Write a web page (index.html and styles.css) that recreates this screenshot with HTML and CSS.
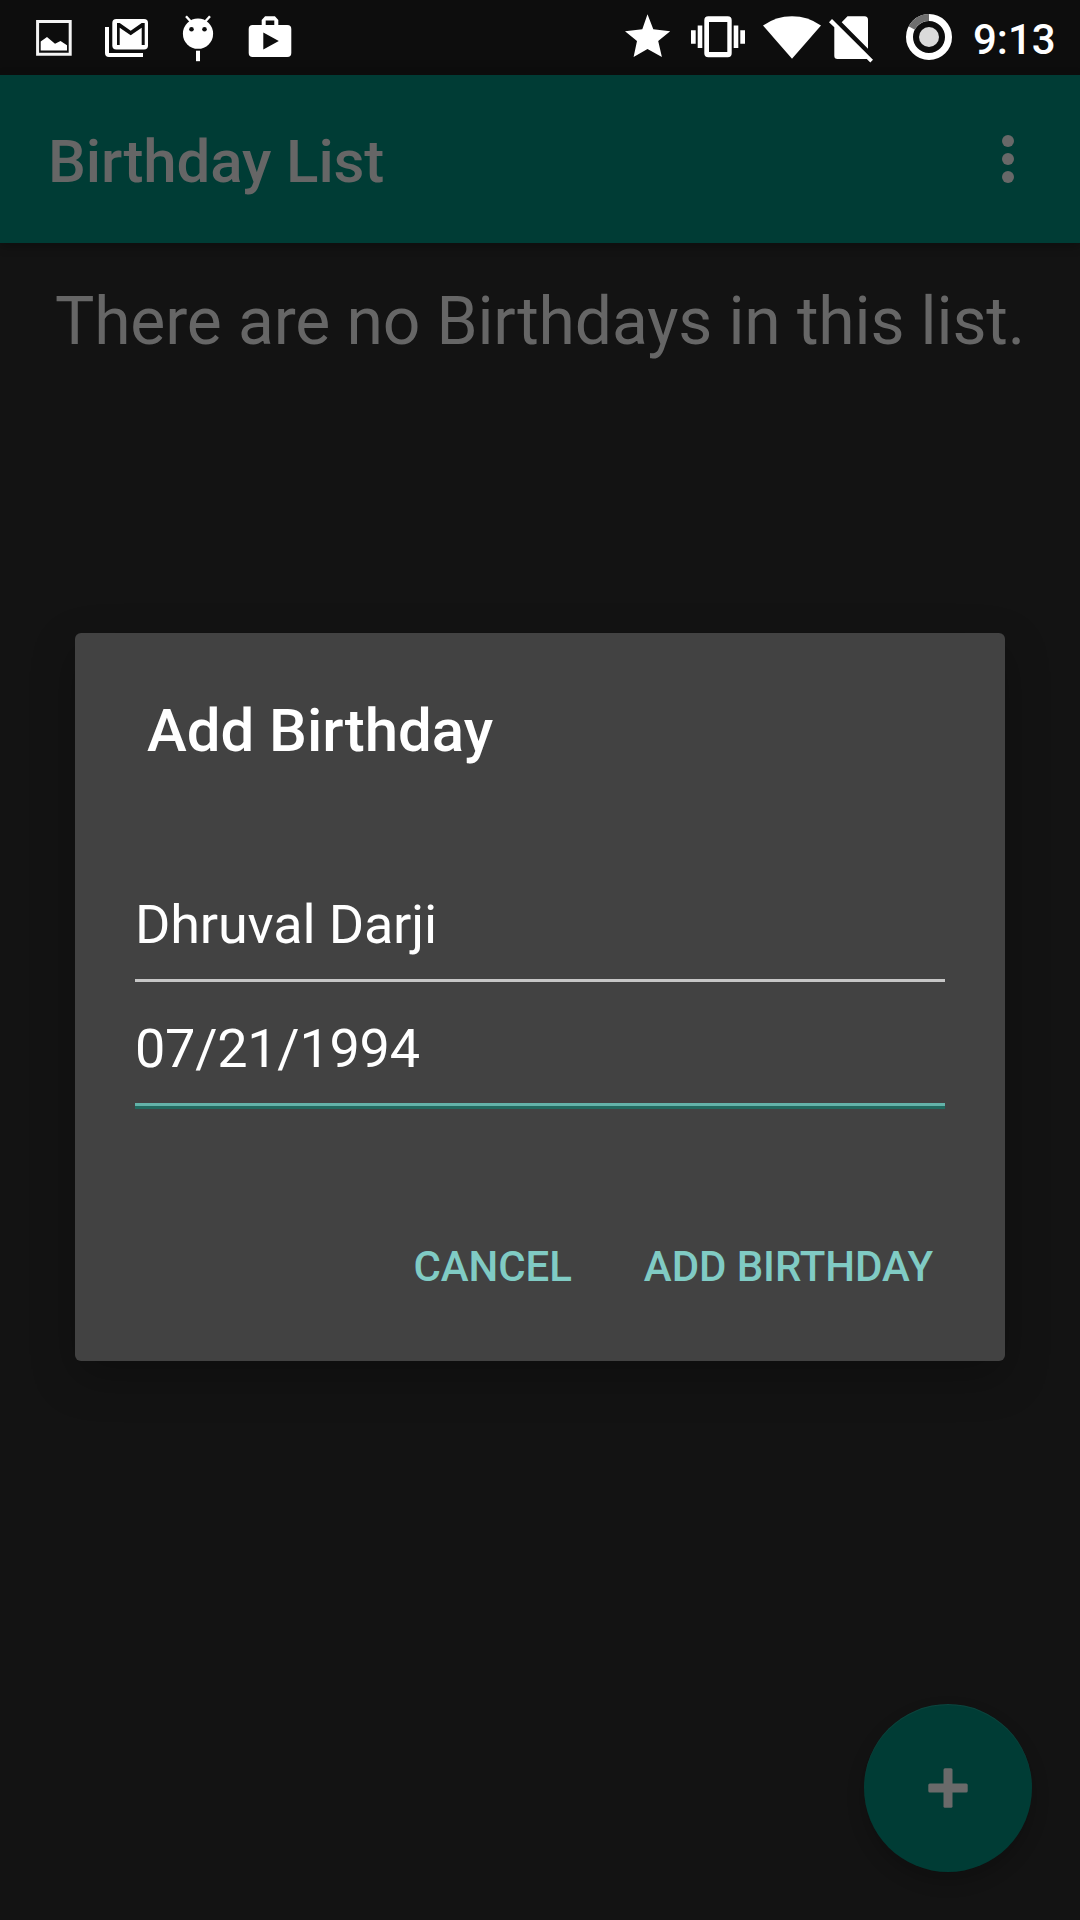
FILE: index.html
```html
<!DOCTYPE html>
<html lang="en">
<head>
<meta charset="utf-8">
<title>Birthday List</title>
<link rel="stylesheet" href="styles.css">
</head>
<body>
<div class="screen">
  <div class="status-bar">
    <div class="notifications">
      <svg width="36" height="75" viewBox="36 0 36 75"><path d="M37.600 21.600h32.600v32.600h-32.600z" fill="none" stroke="#f4f4f4" stroke-width="3"/><path d="M40.700 50.500v-9L47 37l8 6.800 5.500-2.800 6.500 4.300v5.200z" fill="#fff"/></svg>
      <svg width="44" height="75" viewBox="105 0 44 75"><path d="M105 27h4v26h34v4h-34q-4 0-4-4z" fill="#fff"/><rect x="112.300" y="19" width="35.700" height="30.500" rx="4" fill="#fff"/><path d="M117 23h2.700l11 7.700 11-7.700h3v22h-3V27.700l-11 7.500-11-7.500V45H117z" fill="#0d0d0d"/></svg>
      <svg width="32" height="75" viewBox="182 0 32 75"><circle cx="198" cy="33.700" r="15.100" fill="#fff"/><path d="M186 16.300l5 5.500M210 16.300l-5 5.500" stroke="#fff" stroke-width="2.400"/><path d="M196 50.700h4v10.500h-4z" fill="#fff"/><g fill="#0d0d0d"><circle cx="191.500" cy="29.300" r="2.300"/><circle cx="204.500" cy="29.300" r="2.300"/></g></svg>
      <svg width="45" height="75" viewBox="247 0 45 75"><path fill="#fff" fill-rule="evenodd" d="M252.700 25H261.700V20l3.400-3.800h9.800l3.400 3.800v5h9q4 0 4 4v24q0 4-4 4h-34.600q-4 0-4-4V29q0-4 4-4zM265.700 20.500V25h8.600v-4.500zM263.300 32.500v17l15.500-8.500z"/></svg>
    </div>
    <div class="indicators">
      <svg width="60" height="75" viewBox="623 0 60 75"><path fill="#fff" d="M647.5 14.300l5.800 15 16.900 1.900-12 9.800 3.700 16-14.400-8-13.900 8 3.400-16-12-9.800 17.300-1.900z"/></svg>
      <svg width="72" height="75" viewBox="683 0 72 75"><path fill="#fff" fill-rule="evenodd" d="M708.300 16.300h19.400q4 0 4 4v33q0 4-4 4h-19.400q-4 0-4-4v-33q0-4 4-4zM709 22v30h18.300V22zM691 30.300h4.700v13.400H691zM697.700 25.500h4.600V48h-4.600zM733.700 25.500h4.600V48h-4.600zM740.300 30.300h4.700v13.400h-4.700z"/></svg>
      <svg width="70" height="75" viewBox="755 0 70 75"><path fill="#fff" d="M763 25.500Q776 16.200 792 16.200T821 25.500L792 58.700z"/></svg>
      <svg width="60" height="75" viewBox="825 0 60 75"><path fill="#fff" d="M847.500 16.300H864.500q3.500 0 3.500 3.500v28.900L841.700 22.300zM829 22.300l3-3.300 41 40.700-2.700 2.700-3.500-3.500h-29.300q-3.200 0-3.200-3.200V27.300z"/></svg>
      <svg width="80" height="75" viewBox="885 0 80 75"><circle cx="929" cy="37" r="19.500" fill="none" stroke="#fff" stroke-width="7"/><path d="M911.700 28A19.500 19.500 0 0 1 929 17.500" fill="none" stroke="#6e6e6e" stroke-width="7.200"/><circle cx="929" cy="37" r="10" fill="#dadada"/></svg>
      <span class="clock">9:13</span>
    </div>
  </div>

  <header class="app-bar">
    <h1 class="app-title">Birthday List</h1>
    <svg class="overflow" width="12" height="48" viewBox="0 0 12 48" fill="#686868"><circle cx="6" cy="6" r="6"/><circle cx="6" cy="24" r="6"/><circle cx="6" cy="42" r="6"/></svg>
  </header>

  <main class="content">
    <p class="empty">There are no Birthdays in this list.</p>
  </main>

  <div class="fab">
    <svg width="40" height="40" viewBox="0 0 40 40" fill="#6a6a6a"><rect x=".3" y="15.500" width="39.400" height="9" rx="1.500"/><rect x="15.500" y=".3" width="9" height="39.400" rx="1.500"/></svg>
  </div>

  <section class="dialog">
    <h2 class="dialog-title">Add Birthday</h2>
    <div class="fields">
      <div class="field">Dhruval Darji</div>
      <div class="field focused">07/21/1994</div>
    </div>
    <div class="actions">
      <span>CANCEL</span>
      <span>ADD BIRTHDAY</span>
    </div>
  </section>
</div>
</body>
</html>
```
FILE: styles.css
```css
* { box-sizing: border-box; }
body {
  margin: 0;
  background: #131313;
  font-family: Roboto, sans-serif;
}
.screen {
  position: relative;
  display: flex;
  flex-direction: column;
  width: 1080px;
  height: 1920px;
  background: #131313;
  overflow: hidden;
}
h1, h2, p { margin: 0; }
svg { display: block; flex: none; }

.status-bar {
  display: flex;
  justify-content: space-between;
  height: 75px;
  padding: 0 24px 0 36px;
  background: #0d0d0d;
}
.notifications { display: flex; gap: 33px; }
.indicators { display: flex; }
.clock {
  width: 91px;
  padding: 2px 0 0 8px;
  color: #fff;
  font-size: 42px;
  font-weight: 500;
  line-height: 75px;
  white-space: nowrap;
}

.app-bar {
  display: flex;
  align-items: center;
  justify-content: space-between;
  height: 168px;
  padding: 0 66px 0 48px;
  background: #003c35;
  box-shadow: 0 3px 10px rgba(0, 0, 0, .3);
}
.app-title {
  padding-top: 5px;
  color: #666;
  font-size: 60px;
  font-weight: 500;
  line-height: 70px;
  letter-spacing: -.12px;
}

.content { flex: 1; padding-top: 40px; }
.empty {
  color: #666;
  font-size: 66px;
  line-height: 78px;
  letter-spacing: -.14px;
  text-align: center;
  white-space: nowrap;
}

.fab {
  position: absolute;
  right: 48px;
  bottom: 48px;
  display: flex;
  align-items: center;
  justify-content: center;
  width: 168px;
  height: 168px;
  border-radius: 50%;
  background: #003c35;
  box-shadow: 0 9px 18px rgba(0, 0, 0, .2), inset 0 1px 1px rgba(255, 255, 255, .05);
}

.dialog {
  position: absolute;
  top: 633px;
  left: 75px;
  width: 930px;
  height: 728px;
  padding: 63px 60px 0;
  border-radius: 6px;
  background: #424242;
  box-shadow: 0 16px 44px rgba(0, 0, 0, .25);
}
.dialog-title {
  padding-left: 12px;
  color: #fff;
  font-size: 60px;
  font-weight: 500;
  line-height: 70px;
  letter-spacing: -.05px;
}
.fields { margin-top: 92px; }
.field {
  padding: 35px 0 22px;
  border-bottom: 3px solid #c6c6c6;
  color: #fff;
  font-size: 54px;
  line-height: 64px;
  letter-spacing: -.16px;
}
.field.focused {
  border-bottom-color: #63b2a9;
  box-shadow: 0 3px #22695f;
  letter-spacing: -.26px;
}
.actions {
  display: flex;
  justify-content: flex-end;
  gap: 72px;
  padding: 137px 12px 0 0;
  color: #80cbc4;
  font-size: 42px;
  font-weight: 500;
  line-height: 48px;
  letter-spacing: -.08px;
}
```
